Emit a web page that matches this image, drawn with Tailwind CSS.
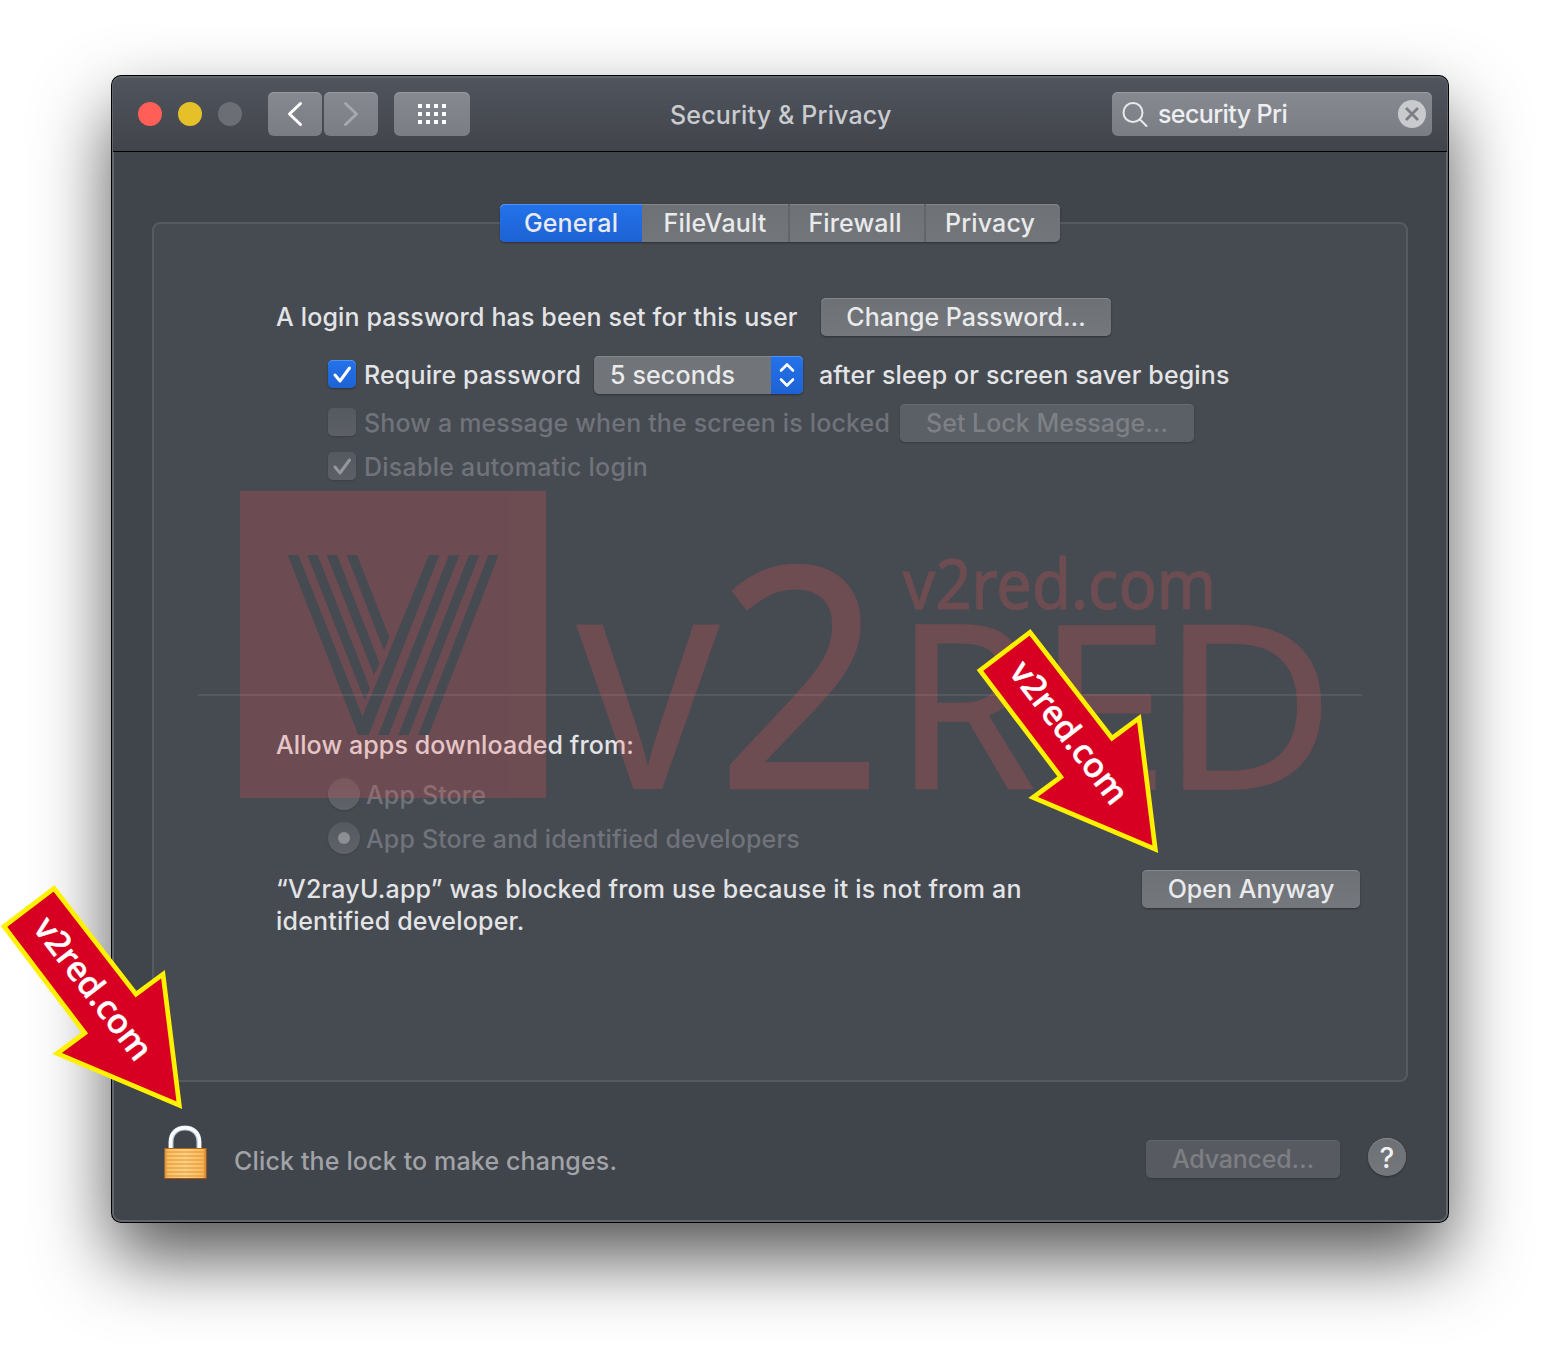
<!DOCTYPE html>
<html lang="en">
<head>
<meta charset="utf-8">
<title>Security &amp; Privacy</title>
<script src="https://cdn.jsdelivr.net/npm/@tailwindcss/browser@4"></script>
</head>
<body class="bg-white">
<div class="relative w-[1560px] h-[1370px] overflow-hidden bg-white pt-[76px] pl-[112px] font-['Inter',sans-serif] font-[450] text-[25px] leading-8 tracking-[0.15px] text-[#e3e4e6] whitespace-nowrap">

  <!-- Window -->
  <main class="flex flex-col w-[1336px] h-[1146px] rounded-[9px] border-2 border-[#62666c] bg-[#40444b] shadow-[0_0_0_1px_#000,0_35px_74px_rgba(0,0,0,0.68)]">

    <!-- Title bar -->
    <header class="relative flex items-start h-[74px] shrink-0 -mx-px rounded-t-[7px] border-b border-black bg-linear-to-b from-[#50545c] to-[#41444b] pt-[14px] pl-[25px] pr-[15px]">
      <div class="flex gap-4 pt-[10px]">
        <span class="size-6 rounded-full bg-[#ff5f57]"></span>
        <span class="size-6 rounded-full bg-[#e6c029]"></span>
        <span class="size-6 rounded-full bg-[#6b6e74]"></span>
      </div>
      <div class="flex gap-[2px] ml-[26px]">
        <button class="flex items-center justify-center w-[54px] h-11 rounded-md bg-linear-to-b from-[#868990] to-[#7a7d84] shadow-[inset_0_1px_0_#989ba1]">
          <svg class="size-11" viewBox="0 0 44 44" fill="none" stroke="#fff" stroke-width="3" stroke-linecap="round" stroke-linejoin="round"><path d="M27.500 11.500 16.500 22l11 10.500"/></svg>
        </button>
        <button class="flex items-center justify-center w-[54px] h-11 rounded-md bg-linear-to-b from-[#868990] to-[#7a7d84] shadow-[inset_0_1px_0_#989ba1]">
          <svg class="size-11" viewBox="0 0 44 44" fill="none" stroke="#a6a8ad" stroke-width="3" stroke-linecap="round" stroke-linejoin="round"><path d="M16.500 11.500 27.500 22l-11 10.500"/></svg>
        </button>
      </div>
      <button class="flex items-center justify-center w-[76px] h-11 ml-4 rounded-md bg-linear-to-b from-[#868990] to-[#7a7d84] shadow-[inset_0_1px_0_#989ba1]">
        <svg class="w-7 h-5" viewBox="0 0 28 20" fill="#fff"><path d="M0 0h4v4H0zM8 0h4v4H8zM16 0h4v4h-4zM24 0h4v4h-4zM0 8h4v4H0zM8 8h4v4H8zM16 8h4v4h-4zM24 8h4v4h-4zM0 16h4v4H0zM8 16h4v4H8zM16 16h4v4h-4zM24 16h4v4h-4z"/></svg>
      </button>
      <h1 class="w-[220px] ml-[200px] pt-[7px] text-center text-[#c9cbcf]">Security &amp; Privacy</h1>
      <div class="flex items-center w-[320px] h-11 ml-auto rounded-md bg-linear-to-b from-[#868990] to-[#7a7d84] shadow-[inset_0_1px_0_#989ba1] pl-[10px] pr-[6px]">
        <svg class="size-7" viewBox="0 0 28 28" fill="none" stroke="#e9eaec" stroke-width="2" stroke-linecap="round"><circle cx="11" cy="12.500" r="9.500"/><path d="m18 19.500 6.500 6.500"/></svg>
        <span class="ml-[8px] -mt-px tracking-[-0.6px] text-[#eeeff1]">security Pri</span>
        <svg class="size-7 ml-auto" viewBox="0 0 28 28"><circle cx="14" cy="14" r="14" fill="#c9cacd"/><path d="m8 8 12 12M20 8 8 20" stroke="#7b7e85" stroke-width="2.800"/></svg>
      </div>
    </header>

    <!-- Tabs -->
    <nav class="relative z-10 flex w-[560px] h-[38px] mt-[52px] -mb-5 mx-auto rounded-[5px] bg-linear-to-b from-[#6e7175] to-[#727579] text-center leading-[38px] text-[#e9eaeb] shadow-[0_1px_2px_rgba(0,0,0,0.35),inset_0_1px_0_#85888b]">
      <span class="w-[142px] rounded-l-[5px] bg-linear-to-b from-[#2472ea] to-[#1d62d4] shadow-[inset_0_1px_0_#4f93f3]">General</span>
      <span class="w-[148px] border-r-2 border-[#62656a]">FileVault</span>
      <span class="w-[136px] pr-1 border-r-2 border-[#62656a]">Firewall</span>
      <span class="flex-1 pr-[6px]">Privacy</span>
    </nav>

    <!-- General pane -->
    <section class="flex flex-col w-[1256px] h-[860px] mx-auto rounded-lg border-2 border-[#565a61] bg-[#464a51] pt-[74px]">
      <div class="flex items-center h-[38px] pl-[122px]">
        <span class="w-[545px]">A login password has been set for this user</span>
        <button class="w-[290px] h-[38px] rounded-[5px] bg-linear-to-b from-[#6d7074] to-[#74777b] shadow-[0_1px_2px_rgba(0,0,0,0.35),inset_0_1px_0_#85888b] tracking-normal text-[#e9eaeb]">Change Password…</button>
      </div>

      <div class="flex items-center h-[38px] mt-5 pl-[174px]">
        <span class="flex size-7 mb-[2px] rounded-[5px] bg-linear-to-b from-[#2472ea] to-[#1d62d4] shadow-[0_1px_2px_rgba(0,0,0,0.35),inset_0_1px_0_#4f93f3]">
          <svg class="size-7" viewBox="0 0 28 28" fill="none" stroke="#fff" stroke-width="3" stroke-linecap="round" stroke-linejoin="round"><path d="m7 15 5 6L21.500 8"/></svg>
        </span>
        <span class="w-[230px] ml-2">Require password</span>
        <div class="flex items-center w-[209px] h-[38px] rounded-[5px] bg-[#717478] shadow-[0_1px_2px_rgba(0,0,0,0.35),inset_0_1px_0_#85888b] pl-4 text-[#e9eaeb]">
          <span>5 seconds</span>
          <span class="flex items-center justify-center w-8 h-[38px] ml-auto rounded-r-[5px] bg-linear-to-b from-[#2472ea] to-[#1d62d4] shadow-[inset_0_1px_0_#4f93f3]">
            <svg class="w-4 h-[26px]" viewBox="0 0 16 26" fill="none" stroke="#fff" stroke-width="2.600" stroke-linecap="round" stroke-linejoin="round"><path d="m2 8.500 6-6 6 6M2 17.500l6 6 6-6"/></svg>
          </span>
        </div>
        <span class="ml-4">after sleep or screen saver begins</span>
      </div>

      <div class="flex items-center h-[38px] mt-[10px] pl-[174px] text-[#70737a]">
        <span class="size-7 mb-[2px] rounded-[5px] bg-linear-to-b from-[#555960] to-[#5c5f66] shadow-[0_1px_2px_rgba(0,0,0,0.15)]"></span>
        <span class="w-[536px] ml-2">Show a message when the screen is locked</span>
        <button class="w-[294px] h-[38px] rounded-[5px] bg-[#5b5f66] shadow-[0_1px_2px_rgba(0,0,0,0.2),inset_0_1px_0_#676b71] tracking-normal text-[#7d8085]">Set Lock Message…</button>
      </div>

      <div class="flex items-center h-7 mt-[10px] pl-[174px] text-[#70737a]">
        <span class="size-7 rounded-[5px] bg-linear-to-b from-[#555960] to-[#5c5f66] shadow-[0_1px_2px_rgba(0,0,0,0.15)]">
          <svg class="size-7" viewBox="0 0 28 28" fill="none" stroke="#94979b" stroke-width="3" stroke-linecap="round" stroke-linejoin="round"><path d="m7 15 5 6L21.500 8"/></svg>
        </span>
        <span class="ml-2 pt-[2px] tracking-[0.25px]">Disable automatic login</span>
      </div>

      <hr class="mt-[214px] mx-11 border-t-2 border-[#565a60]">

      <p class="mt-[33px] pl-[122px] tracking-[0.1px]">Allow apps downloaded from:</p>
      <div class="flex items-center h-8 mt-[17px] pl-[174px] text-[#70737a]">
        <span class="size-8 rounded-full bg-linear-to-b from-[#555960] to-[#5f6269] shadow-[0_1px_2px_rgba(0,0,0,0.15)]"></span>
        <span class="ml-[6px] pt-0.5">App Store</span>
      </div>
      <div class="flex items-center h-8 mt-3 pl-[174px] text-[#70737a]">
        <span class="flex items-center justify-center size-8 rounded-full bg-linear-to-b from-[#555960] to-[#5f6269] shadow-[0_1px_2px_rgba(0,0,0,0.15)]"><span class="size-3 rounded-full bg-[#8c8f94]"></span></span>
        <span class="ml-[6px] pt-0.5">App Store and identified developers</span>
      </div>
      <div class="flex items-start mt-4 pl-[122px]">
        <p class="w-[866px] pt-[3px] tracking-[0.2px]">“V2rayU.app” was blocked from use because it is not from an<br>identified developer.</p>
        <button class="w-[218px] h-[38px] rounded-[5px] bg-linear-to-b from-[#6d7074] to-[#74777b] shadow-[0_1px_2px_rgba(0,0,0,0.35),inset_0_1px_0_#85888b] tracking-normal text-[#e9eaeb]">Open Anyway</button>
      </div>
    </section>

    <!-- Footer -->
    <footer class="flex items-start mt-[42px] pl-[48px] pr-[40px]">
      <svg class="w-[46px] h-[56px]" viewBox="0 0 46 56">
        <defs>
          <linearGradient id="brass" x1="0" y1="0" x2="1" y2="0"><stop offset="0" stop-color="#d98a2b"/><stop offset=".08" stop-color="#fbbf62"/><stop offset=".5" stop-color="#ffd180"/><stop offset=".92" stop-color="#fbb856"/><stop offset="1" stop-color="#c9711c"/></linearGradient>
        </defs>
        <path d="M9 25V18C9 9 15 4 23 4s14 5 14 14v7" fill="none" stroke="#b9c6d2" stroke-width="5"/>
        <path d="M8.600 25V18C8.600 9 15 3.800 23 3.800S37.400 9 37.400 18v7" fill="none" stroke="#fbfcfd" stroke-width="3.400"/>
        <rect x="2.500" y="24" width="42" height="31" rx="1" fill="url(#brass)"/>
        <path d="M3 28h41M3 32h41M3 36h41M3 40h41M3 44h41M3 48h41M3 52h41" stroke="#d9933c"/>
        <path d="M2.500 24.500h42" stroke="#b3661a"/><path d="M2.500 54.500h42" stroke="#a4500f"/>
      </svg>
      <span class="ml-[26px] mt-[21px] text-[#a1a3a7]">Click the lock to make changes.</span>
      <button class="w-[194px] h-[38px] ml-auto mt-4 rounded-[5px] bg-[#575a61] shadow-[0_1px_2px_rgba(0,0,0,0.2),inset_0_1px_0_#63666d] tracking-[-0.2px] text-[#7d7f83]">Advanced…</button>
      <button class="size-[38px] ml-7 mt-[14px] rounded-full bg-linear-to-b from-[#6d7074] to-[#74777b] shadow-[0_1px_2px_rgba(0,0,0,0.35),inset_0_1px_0_#85888b] pt-0.5 text-[28px] text-[#f0f1f2]">?</button>
    </footer>
  </main>

  <!-- Watermark and pointer arrows -->
  <svg class="absolute inset-0 pointer-events-none font-['Noto_Sans',sans-serif] tracking-normal" width="1560" height="1370" viewBox="0 0 1560 1370">
    <g opacity=".22" fill="#f75856" stroke="#f75856" stroke-width="0">
      <path fill-rule="evenodd" d="M240 491h306v307H240z
        M287.700 555h10.600L362.500 716.500 429 555h10.300L368.700 735H358.300z
        M307.300 555h10.400L370 688.300 364.500 700z
        M326.700 555H337L379.700 663.700 374 675z
        M346.700 555H357L389.300 637.300 384 650.500z
        M449 555h10.300L388.700 735H378.300z
        M469 555h10.300L408.700 735H398.300z
        M488.300 555h10.400L428.700 735H418.300z"/>
      <text x="576" y="789" font-size="307" textLength="144" lengthAdjust="spacingAndGlyphs">v</text>
      <text x="717" y="788" font-size="308" textLength="166" lengthAdjust="spacingAndGlyphs" stroke-width="2.500">2</text>
      <text x="894" y="788.500" font-size="229" textLength="142" lengthAdjust="spacingAndGlyphs" stroke-width="1.500">R</text>
      <text x="1036" y="788.500" font-size="229" textLength="133" lengthAdjust="spacingAndGlyphs" stroke-width="1.500">E</text>
      <text x="1161" y="788.500" font-size="229" textLength="174" lengthAdjust="spacingAndGlyphs" stroke-width="1.500">D</text>
      <text x="903" y="609" font-size="70" textLength="313" lengthAdjust="spacingAndGlyphs" stroke-width="1.200">v2red.com</text>
    </g>
    <g id="arrow">
      <path d="M1030 632.300 980 670.500l80.800 106.500-27.800 20.500 122.300 51.700-16.300-131-27 20z" fill="#d70022" stroke="#fff100" stroke-width="4.700" stroke-miterlimit="10"/>
      <text transform="translate(1008.300 672.300) rotate(52.500)" font-size="34" font-weight="500" fill="#fff" stroke="#fff" stroke-width=".5" textLength="170" lengthAdjust="spacingAndGlyphs">v2red.com</text>
    </g>
    <use href="#arrow" x="-976" y="256"/>
  </svg>
</div>
</body>
</html>
